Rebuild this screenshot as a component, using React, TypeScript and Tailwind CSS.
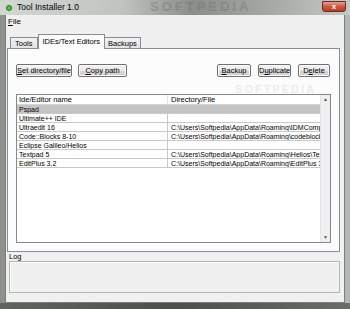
import React from "react";

const rows = [
  { name: "Pspad", dir: "" },
  { name: "Ultimate++ IDE", dir: "" },
  { name: "Ultraedit 16", dir: "C:\\Users\\Softpedia\\AppData\\Roaming\\IDMComp\\UltraEdit" },
  { name: "Code::Blocks 8-10", dir: "C:\\Users\\Softpedia\\AppData\\Roaming\\codeblocks" },
  { name: "Eclipse Galileo/Helios", dir: "" },
  { name: "Textpad 5", dir: "C:\\Users\\Softpedia\\AppData\\Roaming\\Helios\\TextPad" },
  { name: "EditPlus 3.2", dir: "C:\\Users\\Softpedia\\AppData\\Roaming\\EditPlus 3" },
];

function Btn({ label, u, rest, w }: { label: string; u: string; rest: string; w: string }) {
  return (
    <button
      className={`block h-[13px] ${w} shrink-0 whitespace-nowrap overflow-hidden rounded-[2px] border border-[#707070] bg-[linear-gradient(#f4f4f4,#e8e8e8_50%,#d8d8d8_51%,#cfcfcf)] text-[7.5px] leading-[11px] text-black shadow-[inset_0_0_0_1px_#fcfcfc]`}
    >
      {label}
      <span className="underline">{u}</span>
      {rest}
    </button>
  );
}

export default function App() {
  return (
    <div
      className="w-[350px] h-[309px] flex flex-col bg-[linear-gradient(90deg,#8c918c,#a6aaa6_30%,#8a8e8a_60%,#b4b8b4)] overflow-hidden"
      style={{ fontFamily: '"Liberation Sans", Arial, sans-serif' }}
    >
      {/* title bar */}
      <div className="h-[15px] shrink-0 flex items-center relative bg-[linear-gradient(90deg,#d3d7d3,#c0c4c0_35%,#8a8e8a_55%,#a9ada9_80%,#c6c9c6)]">
        <div className="ml-[6px] w-[6px] h-[6px] rounded-full bg-[#3fd12c] border border-[#2a6a20]" />
        <span className="ml-[5px] text-[8.5px] leading-none text-black">Tool Installer 1.0</span>
        <span className="absolute left-[150px] top-[0px] text-[13px] leading-[14px] tracking-[3px] text-[#6f736f] opacity-40 font-bold">
          SOFTPEDIA
        </span>
        <div className="absolute right-[4px] top-[1px] w-[24px] h-[11px] rounded-b-[3px] border border-[#5a3030] bg-[linear-gradient(#e8a090,#d0563f_50%,#c03a22)] flex items-center justify-center">
          <span className="text-[8px] leading-none font-bold text-white">x</span>
        </div>
      </div>

      <div className="flex-1 mx-[5px] bg-[#f0f0f0] flex flex-col border border-[#7a7e7a] border-t-0">
        {/* menu */}
        <div className="h-[13px] flex items-center pl-[2px] text-[8px] leading-none">
          <span>
            <span className="underline">F</span>ile
          </span>
        </div>

        {/* tabs */}
        <div className="mt-[6px] pl-[4px] flex items-end h-[14px] relative z-10 text-[7.5px]">
          <div className="h-[11px] px-[4px] border border-[#898c95] border-b-0 bg-[linear-gradient(#f2f2f2,#e3e3e3)] leading-[11px]">
            Tools
          </div>
          <div className="h-[15px] -mb-[1px] px-[4px] border border-[#898c95] border-b-0 bg-[#fcfcfc] leading-[13px]">
            IDEs/Text Editors
          </div>
          <div className="h-[11px] px-[3px] border border-[#898c95] border-b-0 border-l-0 bg-[linear-gradient(#f2f2f2,#e3e3e3)] leading-[11px]">
            Backups
          </div>
        </div>

        {/* panel */}
        <div className="ml-[1px] mr-[4px] h-[204px] border border-[#898c95] bg-[#fcfcfc] flex flex-col px-[8px]">
          <div className="mt-[15px] flex items-center gap-[6px]">
            <Btn label="" u="S" rest="et directory/file" w="w-[56px]" />
            <Btn label="" u="C" rest="opy path" w="w-[49px]" />
            <div className="ml-auto mr-[1px] flex gap-[7px]">
              <Btn label="" u="B" rest="ackup" w="w-[34px]" />
              <Btn label="D" u="u" rest="plicate" w="w-[33px]" />
              <Btn label="D" u="e" rest="lete" w="w-[32px]" />
            </div>
          </div>

          {/* table */}
          <div className="mt-[17px] h-[149px] w-[315px] border border-[#828790] bg-white flex relative">
            <span className="absolute right-[14px] top-[-11px] text-[11px] leading-none tracking-[2px] text-[#ececec] font-bold">
              SOFTPEDIA
            </span>
            <div className="flex-1 min-w-0 flex flex-col text-[7px] leading-[9px]">
              <div className="h-[10px] flex border-b border-[#d5d5d5] text-[7.5px]">
                <div className="w-[151px] pl-[2px] border-r border-[#e5e5e5] whitespace-nowrap">Ide/Editor name</div>
                <div className="flex-1 pl-[3px] whitespace-nowrap">Directory/File</div>
              </div>
              {rows.map((r, i) => (
                <div
                  key={r.name}
                  className={`h-[9px] flex border-b border-[#c8c8c8] ${i === 0 ? "bg-[#c4c4c4]" : ""}`}
                >
                  <div className={`w-[151px] shrink-0 pl-[2px] whitespace-nowrap overflow-hidden ${i === 0 ? "" : "border-r border-[#c8c8c8]"}`}>
                    {r.name}
                  </div>
                  <div className="flex-1 min-w-0 pl-[3px] whitespace-nowrap overflow-hidden">{r.dir}</div>
                </div>
              ))}
            </div>
            <div className="w-[10px] shrink-0 bg-[#f0f0f0] border-l border-[#e3e3e3] flex flex-col justify-between items-center py-[2px]">
              <span className="text-[5px] leading-none text-[#555]">▲</span>
              <span className="text-[5px] leading-none text-[#555]">▼</span>
            </div>
          </div>
        </div>

        {/* log */}
        <div className="pl-[3px] text-[7.5px] leading-[9px]">Log</div>
        <div className="ml-[3px] mr-[4px] h-[32px] border border-[#b5b5b5] bg-[#f0f0f0] shadow-[inset_1px_1px_0_#fff]" />
      </div>
      <div className="h-[6px] shrink-0 bg-[linear-gradient(90deg,#606460,#4c504c_50%,#6a6e6a)]" />
    </div>
  );
}
